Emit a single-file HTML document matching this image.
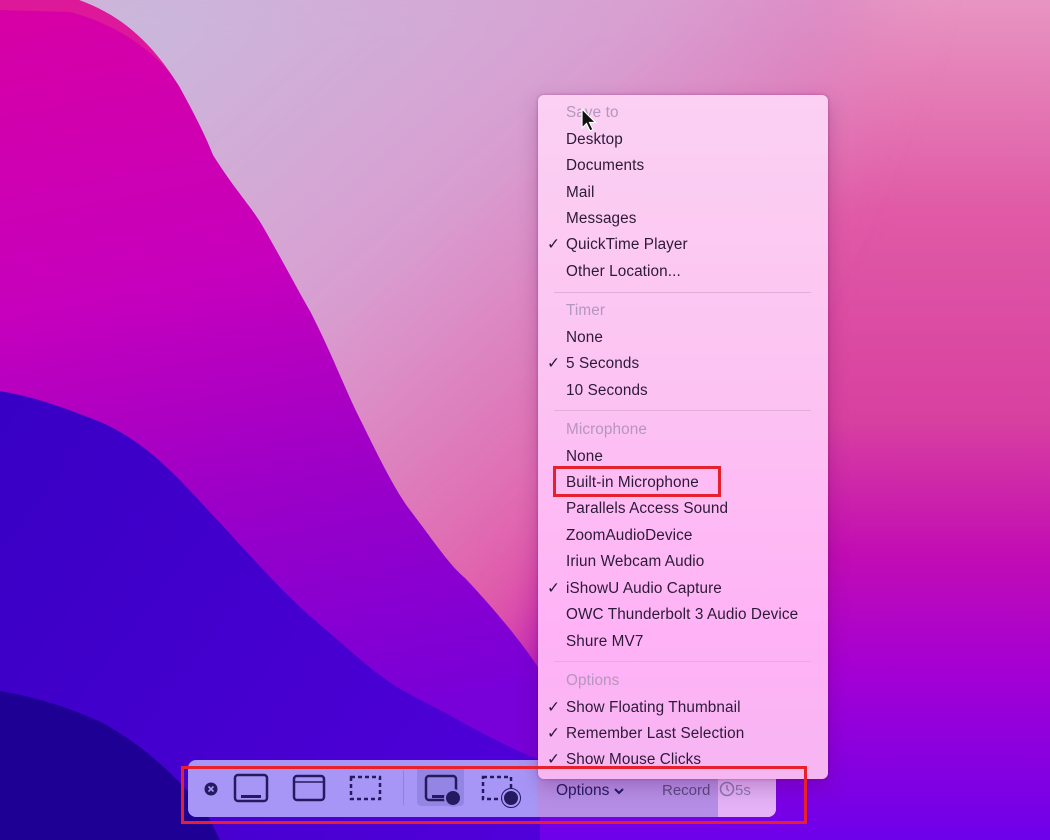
<!DOCTYPE html>
<html><head><meta charset="utf-8"><style>
html,body{margin:0;padding:0;width:1050px;height:840px;overflow:hidden;font-family:"Liberation Sans",sans-serif}
#bg{position:absolute;left:0;top:0}
.menu{position:absolute;z-index:5;left:538px;top:95px;width:290px;height:684px;border-radius:6px;background:linear-gradient(180deg,#fbd0f3 0%,#fcc4f2 40%,#ffb2f6 80%,#f6b6f2 100%);box-shadow:0 0 3px rgba(120,0,100,.35),0 8px 20px rgba(80,0,80,.25);overflow:hidden}
.it{position:absolute;left:28px;font-size:15.3px;color:#2c1a38;line-height:18px;white-space:nowrap;letter-spacing:.1px}
.h{color:#b596bd}
.ck{position:absolute;left:-19px;top:0}
.sep{position:absolute;left:16px;width:257px;height:1px;background:#e0b0d8}
.tb{position:absolute;left:188px;top:760px;width:588px;height:57px;border-radius:8px;background:#a896f6;overflow:hidden}
.red{position:absolute;z-index:8;border:3px solid #e8202c;box-sizing:border-box}
</style></head><body>
<svg id="bg" width="1050" height="840" viewBox="0 0 1050 840">
<defs>
<linearGradient id="rg" x1="0" y1="0" x2="0" y2="1">
<stop offset="0" stop-color="#e895c2"/><stop offset=".25" stop-color="#e05aa6"/><stop offset=".5" stop-color="#d840a0"/><stop offset=".66" stop-color="#c20cb4"/><stop offset=".8" stop-color="#a400d4"/><stop offset="1" stop-color="#6e00ea"/>
</linearGradient>
<linearGradient id="lg" gradientUnits="userSpaceOnUse" x1="150" y1="0" x2="640" y2="560">
<stop offset="0" stop-color="#cab8dc"/><stop offset=".45" stop-color="#d8a0d2"/><stop offset=".8" stop-color="#e070b4"/><stop offset="1" stop-color="#e04aa2"/>
</linearGradient>
<linearGradient id="mg" gradientUnits="userSpaceOnUse" x1="0" y1="0" x2="150" y2="760">
<stop offset="0" stop-color="#d800a4"/><stop offset=".4" stop-color="#c600bc"/><stop offset=".7" stop-color="#9a00c8"/><stop offset="1" stop-color="#7800d8"/>
</linearGradient>
<linearGradient id="bl" gradientUnits="userSpaceOnUse" x1="0" y1="400" x2="540" y2="800">
<stop offset="0" stop-color="#3800c4"/><stop offset="1" stop-color="#5000d8"/>
</linearGradient>
<filter id="bz" x="-20%" y="-20%" width="140%" height="140%"><feGaussianBlur stdDeviation="40"/></filter>
</defs>
<rect width="1050" height="840" fill="url(#rg)"/>
<path d="M40,-60 L880,-60 C840,120 760,280 680,400 C630,480 580,560 520,700 L40,700 Z" fill="url(#lg)" filter="url(#bz)"/>
<path d="M0,0 L79,0 C120,15 150,40 179,86 C195,115 205,135 213,155 C235,190 250,205 262,225 C285,265 295,285 310,311 C335,360 345,390 362,423 C385,470 398,495 413,514 C440,550 450,565 465,578 C495,610 520,640 540,670 L540,840 L0,840 Z" fill="url(#mg)"/>
<path d="M0,0 L79,0 C120,15 150,40 179,86 C160,55 120,25 70,12 L0,10 Z" fill="#e02294" opacity=".7"/>
<path d="M0,391 C40,398 70,410 103,423 C150,445 180,480 207,509 C250,555 280,590 310,616 C350,650 380,680 413,696 C460,720 500,745 540,760 L540,840 L0,840 Z" fill="url(#bl)"/>
<path d="M0,691 C40,698 70,708 103,723 C150,750 180,780 207,814 L220,840 L0,840 Z" fill="#1e0094"/>
</svg>

<div class="tb">
<div style="position:absolute;left:349px;top:0;width:181px;height:57px;background:#b68ee6"></div>
<div style="position:absolute;left:530px;top:0;width:58px;height:57px;background:#e4b2f6"></div>
<div style="position:absolute;left:229px;top:6px;width:47px;height:40px;background:#9484e4;border-radius:4px"></div>
<div style="position:absolute;left:215px;top:10px;width:1px;height:35px;background:#9080e0"></div>
<svg width="588" height="57" style="position:absolute;left:0;top:0">
<g fill="none" stroke="#241a60" stroke-width="2.5">
<circle cx="23" cy="29" r="6.5" fill="#241a60" stroke="none"/>
<path d="M20.5,26.5 l5,5 M25.5,26.5 l-5,5" stroke="#a896f6" stroke-width="1.6"/>
<rect x="47" y="15" width="32" height="26" rx="3"/>
<rect x="53" y="35" width="20" height="3" fill="#241a60" stroke="none"/>
<rect x="106" y="16" width="30" height="24" rx="3"/>
<path d="M106,22 h30" stroke-width="1.5"/>
<rect x="163" y="17" width="29" height="22" stroke-dasharray="4 3"/>
<rect x="238" y="16" width="30" height="24" rx="3"/>
<rect x="244" y="35" width="14" height="3" fill="#241a60" stroke="none"/>
<circle cx="265" cy="38" r="8" fill="#241a60" stroke="#9484e4" stroke-width="2"/>
<rect x="295" y="17" width="28" height="22" stroke-dasharray="4 3"/>
<circle cx="323" cy="38" r="8" fill="#241a60" stroke="#a896f6" stroke-width="2"/>
<circle cx="323" cy="38" r="9.5" stroke="#241a60" stroke-width="1"/>
</g>
<text x="368" y="35" font-size="15.5" fill="#241a60" font-family="Liberation Sans">Options</text>
<path d="M427,29 l4,4 l4,-4" fill="none" stroke="#241a60" stroke-width="2"/>
<text x="474" y="35" font-size="15" fill="#5a4a80" font-family="Liberation Sans">Record</text>
<circle cx="539" cy="29" r="6.5" fill="none" stroke="#8a78b0" stroke-width="1.6"/>
<path d="M539,25 v4 l2,2" fill="none" stroke="#8a78b0" stroke-width="1.4"/>
<text x="547" y="35" font-size="15" fill="#8a78b0" font-family="Liberation Sans">5s</text>
</svg>
</div>

<div class="menu">
<div class="it h" style="top:9px">Save to</div>
<div class="it" style="top:36px">Desktop</div>
<div class="it" style="top:62px">Documents</div>
<div class="it" style="top:89px">Mail</div>
<div class="it" style="top:115px">Messages</div>
<div class="it" style="top:141px"><span class="ck">✓</span>QuickTime Player</div>
<div class="it" style="top:168px">Other Location...</div>
<div class="sep" style="top:197px"></div>
<div class="it h" style="top:207px">Timer</div>
<div class="it" style="top:234px">None</div>
<div class="it" style="top:260px"><span class="ck">✓</span>5 Seconds</div>
<div class="it" style="top:287px">10 Seconds</div>
<div class="sep" style="top:315px"></div>
<div class="it h" style="top:326px">Microphone</div>
<div class="it" style="top:353px">None</div>
<div class="it" style="top:379px">Built-in Microphone</div>
<div class="it" style="top:405px">Parallels Access Sound</div>
<div class="it" style="top:432px">ZoomAudioDevice</div>
<div class="it" style="top:458px">Iriun Webcam Audio</div>
<div class="it" style="top:485px"><span class="ck">✓</span>iShowU Audio Capture</div>
<div class="it" style="top:511px">OWC Thunderbolt 3 Audio Device</div>
<div class="it" style="top:538px">Shure MV7</div>
<div class="sep" style="top:566px"></div>
<div class="it h" style="top:577px">Options</div>
<div class="it" style="top:604px"><span class="ck">✓</span>Show Floating Thumbnail</div>
<div class="it" style="top:630px"><span class="ck">✓</span>Remember Last Selection</div>
<div class="it" style="top:656px"><span class="ck">✓</span>Show Mouse Clicks</div>
</div>

<svg width="20" height="28" style="position:absolute;z-index:9;left:580px;top:108px">
<path d="M2,1 L2,20 L6.5,15.5 L10,23 L13,21.5 L9.5,14.5 L15.5,14.5 Z" fill="#111" stroke="#fff" stroke-width="1.2"/>
</svg>

<div class="red" style="left:553px;top:466px;width:168px;height:31px"></div>
<div class="red" style="left:181px;top:766px;width:626px;height:58px"></div>
</body></html>
